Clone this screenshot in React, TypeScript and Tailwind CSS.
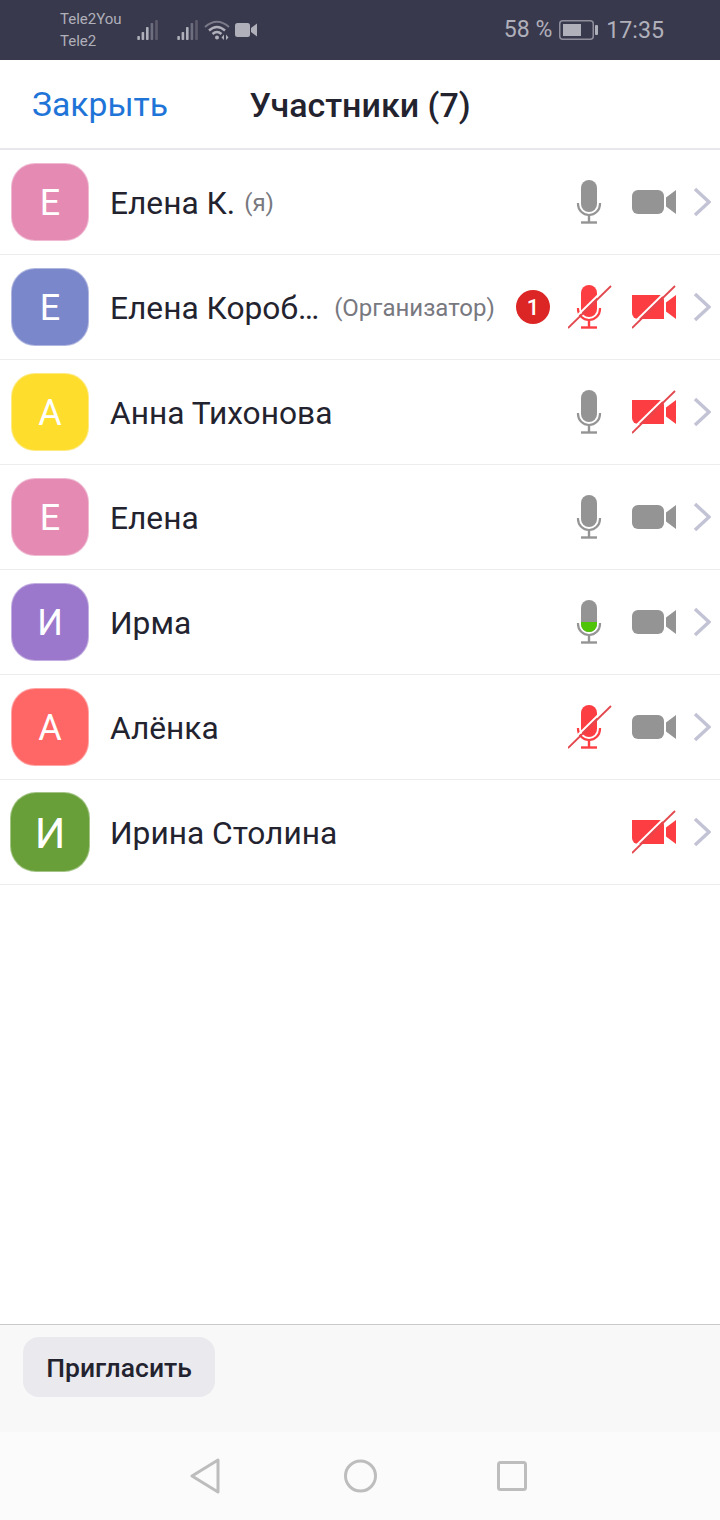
import React from "react";

type Person = {
  initial: string;
  color: string;
  big?: boolean;
  name: string;
  note?: string;
  noteGap?: string;
  badge?: number;
  mic: "on" | "off" | "talk" | "none";
  cam: "on" | "off";
};

const people: Person[] = [
  { initial: "Е", color: "bg-[#e48ab3]", name: "Елена К.", note: "(я)", noteGap: "ml-[9px]", mic: "on", cam: "on" },
  { initial: "Е", color: "bg-[#7b87cb]", name: "Елена Короб…", note: "(Организатор)", noteGap: "ml-[15px]", badge: 1, mic: "off", cam: "off" },
  { initial: "А", color: "bg-[#fedd2c]", name: "Анна Тихонова", mic: "on", cam: "off" },
  { initial: "Е", color: "bg-[#e48ab3]", name: "Елена", mic: "on", cam: "on" },
  { initial: "И", color: "bg-[#9b78cc]", name: "Ирма", mic: "talk", cam: "on" },
  { initial: "А", color: "bg-[#ff6666]", name: "Алёнка", mic: "off", cam: "on" },
  { initial: "И", color: "bg-[#689f38]", big: true, name: "Ирина Столина", mic: "none", cam: "off" },
];

function Slash() {
  return (
    <>
      <path d="M-1.5 41 L41.5 -1" stroke="#ffffff" strokeWidth="2" />
      <path d="M0 43 L43 1" stroke="#e2484e" strokeWidth="1.8" />
    </>
  );
}

function Mic({ state }: { state: Person["mic"] }) {
  const muted = state === "off";
  const fill = muted ? "#fc3d41" : "#949494";
  return (
    <svg width="44" height="44" viewBox="0 0 44 44" fill="none" className="shrink-0">
      <rect x="13" y="0" width="16" height="32" rx="8" fill={fill} />
      {state === "talk" && <path d="M13 22 H29 V24 A8 8 0 0 1 13 24 Z" fill="#4fc408" />}
      <path d="M10 23 V24 A11 11 0 0 0 32 24 V23" stroke={fill} strokeWidth="2.2" />
      <path d="M21 35 V42" stroke={fill} strokeWidth="2.4" />
      <path d="M13 42.5 H29" stroke={fill} strokeWidth="2.4" />
      {muted && <Slash />}
    </svg>
  );
}

function Cam({ state }: { state: Person["cam"] }) {
  const muted = state === "off";
  const fill = muted ? "#fc3d41" : "#949494";
  return (
    <svg width="44" height="44" viewBox="0 0 44 44" fill="none" className="shrink-0">
      {muted ? (
        <path d="M0 10 H27 A5 5 0 0 1 32 15 V34 H6 A6 6 0 0 1 0 28 Z" fill={fill} />
      ) : (
        <rect x="0" y="10" width="32" height="24" rx="6" fill={fill} />
      )}
      <path d="M34 17.5 L44 10 V34 L34 26.5 Z" fill={fill} />
      {muted && <Slash />}
    </svg>
  );
}

function Row({ p }: { p: Person }) {
  return (
    <div className="flex h-[105px] items-center border-b border-[#ececef] pl-[11px] pr-[9px]">
      <div
        className={`flex shrink-0 items-center justify-center border border-white/40 pt-[2px] text-white ${
          p.big ? "mx-[-1px] h-[80px] w-[80px] rounded-[26px] text-[43px]" : "h-[78px] w-[78px] rounded-[24px] text-[36px]"
        } ${p.color}`}
      >
        {p.initial}
      </div>
      <span className="ml-[21px] pt-[4px] text-[31.7px] leading-none text-[#23232f]">{p.name}</span>
      {p.note && <span className={`pt-[2px] text-[24px] leading-none text-[#78787f] ${p.noteGap}`}>{p.note}</span>}
      <div className="ml-auto flex items-center">
        {p.badge && (
          <span className="mr-[18px] flex h-[34px] w-[34px] items-center justify-center rounded-full bg-[#dc2626] text-[22px] font-medium text-white">
            {p.badge}
          </span>
        )}
        {p.mic !== "none" && <Mic state={p.mic} />}
        <div className="ml-[20px]">
          <Cam state={p.cam} />
        </div>
        <svg width="18" height="30" viewBox="0 0 18 30" fill="none" className="ml-[17px]">
          <path d="M2 2 L16 15 L2 28" stroke="#c3c3d6" strokeWidth="3.5" />
        </svg>
      </div>
    </div>
  );
}

function Signal() {
  return (
    <svg width="22" height="20" viewBox="0 0 22 20" fill="#b0b0ba">
      <rect x="0.3" y="16" width="2.6" height="4" rx="0.8" />
      <rect x="4.6" y="12" width="2.6" height="8" rx="0.8" />
      <rect x="9" y="7" width="2.6" height="13" rx="0.8" />
      <rect x="13.6" y="3" width="2.6" height="17" rx="0.8" opacity="0.45" />
      <rect x="18.2" y="0" width="2.6" height="20" rx="0.8" opacity="0.3" />
    </svg>
  );
}

export default function App() {
  return (
    <div className="flex h-[1520px] w-[720px] flex-col bg-white font-['Roboto',sans-serif]">
      {/* status bar */}
      <div className="flex h-[60px] shrink-0 items-center bg-[#39394d] pl-[60px] pr-[56px] text-[#b0b0ba]">
        <div className="flex w-[77px] flex-col gap-[3px] text-[15px] leading-[19px]">
          <span>Tele2You</span>
          <span>Tele2</span>
        </div>
        <Signal />
        <div className="ml-[18px]">
          <Signal />
        </div>
        <svg width="26" height="20" viewBox="0 0 26 20" fill="none" className="ml-[5px]">
          <path d="M1 7 Q13 -3.5 25 7" stroke="#b0b0ba" strokeWidth="2" opacity="0.55" />
          <path d="M5 10.5 Q13 3.5 21 10.5" stroke="#b0b0ba" strokeWidth="2.4" />
          <path d="M8.5 14 Q13 10 17.5 14" stroke="#b0b0ba" strokeWidth="2.4" />
          <circle cx="13" cy="17.5" r="2" fill="#b0b0ba" />
          <path d="M20 14.5 L17.5 17.5 L20 20 Z M22 14.5 L24.5 17.5 L22 20 Z" fill="#b0b0ba" />
        </svg>
        <svg width="22" height="14" viewBox="0 0 22 14" fill="#b0b0ba" className="ml-[5px]">
          <rect x="0" y="0" width="15" height="14" rx="2.5" />
          <path d="M16 5 L22 0.5 V13.5 L16 9 Z" />
        </svg>
        <span className="ml-auto text-[23px]">58 %</span>
        <svg width="39" height="20" viewBox="0 0 39 20" fill="none" className="ml-[7px]">
          <rect x="0.75" y="0.75" width="33.5" height="18.5" rx="3" stroke="#8e8e9c" strokeWidth="1.5" />
          <rect x="4" y="4" width="18" height="12" fill="#b0b0ba" />
          <rect x="36" y="5" width="3" height="10" rx="1" fill="#b0b0ba" />
        </svg>
        <span className="ml-[8px] text-[23.2px]">17:35</span>
      </div>

      {/* header */}
      <div className="grid h-[90px] shrink-0 grid-cols-[1fr_auto_1fr] items-center border-b-2 border-[#e8e8ec] pt-[3px]">
        <span className="pl-[32px] text-[33.7px] text-[#1f74d8]">Закрыть</span>
        <span className="text-[34px] font-medium text-[#23232f]">Участники (7)</span>
      </div>

      {/* list */}
      <div className="flex-1">
        {people.map((p, i) => (
          <Row key={i} p={p} />
        ))}
      </div>

      {/* invite */}
      <div className="h-[108px] shrink-0 border-t border-[#c9c9c9] bg-[#f8f8f8] pl-[23px] pt-[12px]">
        <button className="h-[60px] w-[192px] rounded-[16px] bg-[#e9e9ee] pt-[1px] text-[26.5px] font-medium text-[#23232f]">
          Пригласить
        </button>
      </div>

      {/* android nav */}
      <div className="flex h-[88px] shrink-0 items-center bg-[#fbfbfb] pl-[189px]">
        <svg width="32" height="36" viewBox="0 0 32 36" fill="none">
          <path d="M29 2 V34 L3 18 Z" stroke="#bdbdbd" strokeWidth="3" strokeLinejoin="round" />
        </svg>
        <svg width="33" height="34" viewBox="0 0 33 34" fill="none" className="ml-[123px]">
          <circle cx="16.5" cy="17" r="15" stroke="#bdbdbd" strokeWidth="3" />
        </svg>
        <svg width="30" height="30" viewBox="0 0 30 30" fill="none" className="ml-[120px]">
          <rect x="1.5" y="1.5" width="27" height="27" rx="2" stroke="#bdbdbd" strokeWidth="3" />
        </svg>
      </div>
    </div>
  );
}
